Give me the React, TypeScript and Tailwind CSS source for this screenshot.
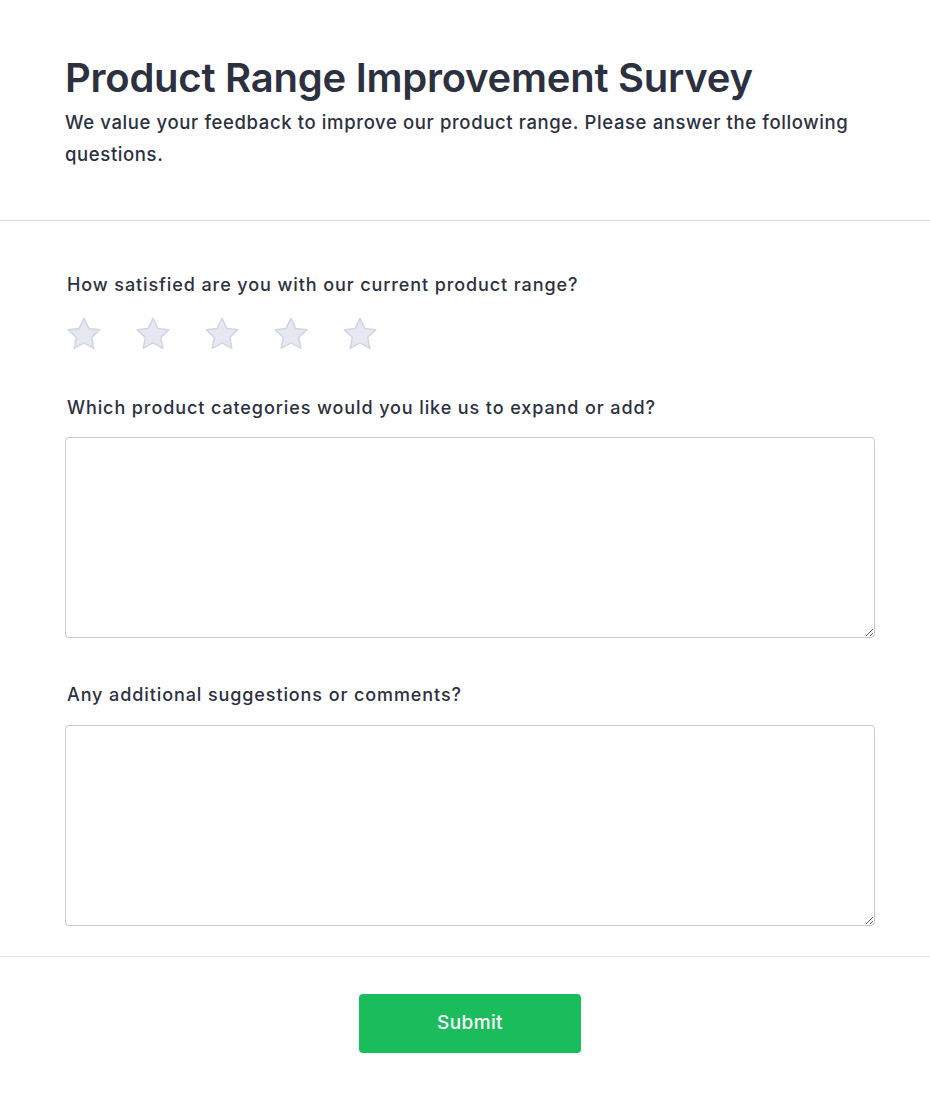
import { useState } from 'react';

const Star = ({ active }: { active: boolean }) => (
  <svg viewBox="0 0 24 24" className="h-[40px] w-[40px]">
    <path
      d="M12 2.6l2.9 6.05 6.6.8-4.87 4.57 1.25 6.55L12 17.35l-5.88 3.22 1.25-6.55L2.5 9.45l6.6-.8z"
      fill={active ? '#facc15' : '#e5e7f1'}
      stroke={active ? '#eab308' : '#d2d5e3'}
      strokeWidth="0.9"
      strokeLinejoin="round"
    />
  </svg>
);

export default function App() {
  const [rating, setRating] = useState(0);

  return (
    <div className="min-h-[1103px] bg-white text-[#2c303f] font-['Inter',sans-serif]">
      <header className="pl-[65px] pr-[55px] pt-[52px] pb-[50px]">
        <h1 className="text-[40px] leading-[52px] font-semibold tracking-[-0.25px]">
          Product Range Improvement Survey
        </h1>
        <p className="mt-[2px] text-[18.5px] leading-[32px] font-[450] tracking-[0.62px]">
          We value your feedback to improve our product range. Please answer the following
          questions.
        </p>
      </header>

      <div className="border-t border-[#d9d9e6]" />

      <form className="pl-[65px] pr-[55px] pt-[51px]" onSubmit={(e) => e.preventDefault()}>
        <div>
          <label className="block pl-[2px] text-[18px] leading-[26px] font-[450] tracking-[0.9px]">
            How satisfied are you with our current product range?
          </label>
          <div className="mt-[16px] flex gap-[30px]">
            {[1, 2, 3, 4, 5].map((n) => (
              <button key={n} type="button" onClick={() => setRating(n)} className="-ml-[1px]">
                <Star active={n <= rating} />
              </button>
            ))}
          </div>
        </div>

        <div className="mt-[41px]">
          <label className="block pl-[2px] text-[18px] leading-[26px] font-[450] tracking-[0.9px]">
            Which product categories would you like us to expand or add?
          </label>
          <textarea className="mt-[16px] block h-[201px] w-full rounded-[4px] border border-[#c9c9d6] outline-none" />
        </div>

        <div className="mt-[44px]">
          <label className="block pl-[2px] text-[18px] leading-[26px] font-[450] tracking-[0.9px]">
            Any additional suggestions or comments?
          </label>
          <textarea className="mt-[17px] block h-[201px] w-full rounded-[4px] border border-[#c9c9d6] outline-none" />
        </div>
      </form>

      <div className="mt-[30px] border-t border-[#e8e8f3]" />

      <div className="flex justify-center pl-[65px] pr-[55px] pt-[37px]">
        <button
          type="submit"
          className="h-[59px] w-[222px] rounded-[4px] bg-[#1abc5c] text-[19px] font-medium tracking-[0.4px] text-white"
        >
          Submit
        </button>
      </div>
    </div>
  );
}
